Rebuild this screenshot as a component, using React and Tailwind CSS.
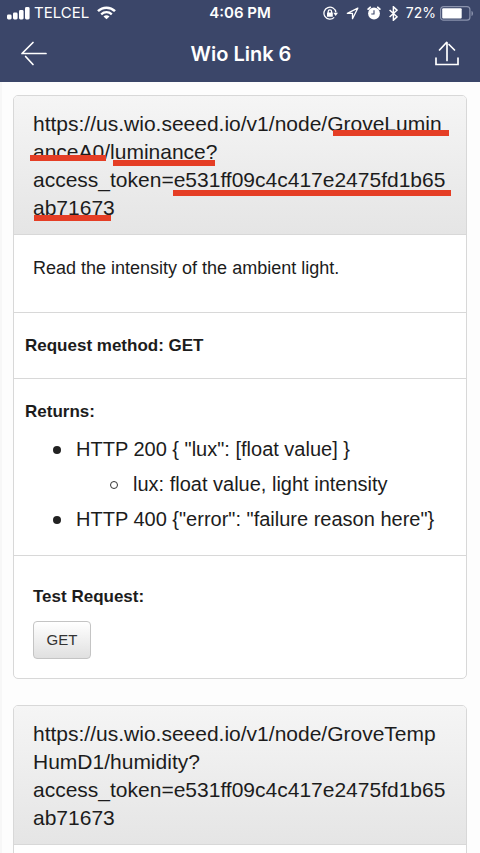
import React from "react";

const TOKEN_HEAD = "e531ff09c4c417e2475fd1b65";
const TOKEN_TAIL = "ab71673";

function StatusBar() {
  return (
    <div className="flex h-[26px] items-center px-[7px] text-white">
      <div className="flex flex-1 items-center">
        <svg className="h-[13px] w-[23px]" viewBox="0 0 23 13" fill="currentColor" aria-label="Signal">
          <rect x="0" y="7.5" width="4.6" height="5" rx="1.4" />
          <rect x="6" y="5.5" width="4.6" height="7" rx="1.4" />
          <rect x="12" y="3" width="4.6" height="9.5" rx="1.4" />
          <rect x="18" y="0" width="4.6" height="12.5" rx="1.4" />
        </svg>
        <span className="ml-1 font-[Inter,sans-serif] text-[15px] leading-5">TELCEL</span>
        <svg className="ml-2 h-[14px] w-[19px]" viewBox="0 0 19 14" fill="none" stroke="currentColor" aria-label="Wi-Fi">
          <path d="M1 5.1C5.7.5 13.3.5 18 5.1" strokeWidth="2.5" />
          <path d="M4.2 8.3c3-2.8 7.6-2.8 10.6 0" strokeWidth="2.3" />
          <path d="M9.5 13.3 6.5 10.4c1.7-1.5 4.3-1.5 6 0Z" fill="currentColor" stroke="none" />
        </svg>
      </div>
      <span className="font-[Inter,sans-serif] text-[15px] leading-5 font-semibold">4:06 PM</span>
      <div className="flex flex-1 items-center justify-end">
        <svg className="h-[15px] w-[15px]" viewBox="0 0 15 15" fill="none" stroke="currentColor" aria-label="Rotation lock">
          <path d="M12.9 6.3A6 6 0 1 0 11.2 11.4" strokeWidth="1.3" />
          <path d="M10.3 6.7h4.7l-2.3 3.2Z" fill="currentColor" stroke="none" />
          <rect x="4" y="6.5" width="5.8" height="4.2" rx=".5" fill="currentColor" stroke="none" />
          <path d="M5.2 7V5.5a1.7 1.7 0 0 1 3.4 0V7" strokeWidth="1.3" />
        </svg>
        <svg className="ml-2 h-[13px] w-[13px]" viewBox="0 0 13 13" fill="none" stroke="currentColor" aria-label="Location">
          <path d="M11.8 1.2 1.3 6.3h5.2v5.4Z" strokeWidth="1.3" strokeLinejoin="round" />
        </svg>
        <svg className="ml-2 h-[14px] w-[14px]" viewBox="0 0 14 14" aria-label="Alarm">
          <path d="M1.2 3.2 3.2 1.3M12.8 3.2 10.8 1.3" stroke="currentColor" strokeWidth="1.8" strokeLinecap="round" />
          <circle cx="7" cy="7.5" r="5.9" fill="currentColor" />
          <path d="M7 4.3v3.7H4.3" fill="none" stroke="#3b4669" strokeWidth="1.1" />
        </svg>
        <svg className="ml-2 h-[15px] w-[9px]" viewBox="0 0 9 15" fill="none" stroke="currentColor" aria-label="Bluetooth">
          <path d="m.6 4 7.4 6.8-3.6 3.4V.8L8 4.2.6 11" strokeWidth="1.5" />
        </svg>
        <span className="ml-2 font-[Inter,sans-serif] text-[14px] leading-5">72%</span>
        <svg className="ml-1 -mr-[1px] h-[15px] w-[34px]" viewBox="0 0 34 15" aria-label="Battery">
          <rect x=".6" y=".6" width="29.3" height="13.6" rx="3" fill="none" stroke="#8b93ad" strokeWidth="1.2" />
          <rect x="2.2" y="2.2" width="19.5" height="10.4" rx="1" fill="currentColor" />
          <path d="M31.5 5c2 .6 2 4.4 0 5Z" fill="#8b93ad" />
        </svg>
      </div>
    </div>
  );
}

function NavBar() {
  return (
    <div className="flex h-14 items-center justify-between px-5 text-white">
      <button type="button" aria-label="Back" className="flex h-8 w-[28px] items-center">
        <svg className="h-[26px] w-[28px]" viewBox="0 0 28 26" fill="none" stroke="currentColor" strokeWidth="1.7" strokeLinecap="round">
          <path d="M2 12.5h24M13 1.5 2 12.5M5.6 15.5 13 23.5" />
        </svg>
      </button>
      <h1 className="font-[Inter,sans-serif] text-[20px] leading-7 font-semibold">Wio Link 6</h1>
      <button type="button" aria-label="Share" className="flex h-8 w-[26px] items-center">
        <svg className="h-[26px] w-[26px]" viewBox="0 0 26 26" fill="none" stroke="currentColor" strokeWidth="1.7" strokeLinecap="round">
          <path d="M13 19.5V1.5M5.5 9 12.5 1.5M20.5 9l-5.5-5.5M2 17v6.5h22V17" />
        </svg>
      </button>
    </div>
  );
}

function Mark({ className }) {
  return <span aria-hidden="true" className={"absolute h-[6px] bg-[#e53e25] " + className} />;
}

function Endpoint({ lines, marks, children }) {
  return (
    <section className="rounded-[5px] border border-[#d8d8d8] bg-white">
      <h2 className="relative rounded-t-[4px] border-b border-[#d8d8d8] bg-linear-to-b from-[#f5f5f5] to-[#e5e5e5] px-[19px] pt-[14px] pb-3 text-[21px] leading-7">
        {lines.map((line) => (
          <span key={line} className="block whitespace-nowrap">{line}</span>
        ))}
        {marks}
      </h2>
      {children}
    </section>
  );
}

function Item({ hollow, children }) {
  return (
    <div className="flex items-center">
      <span
        className={
          hollow
            ? "mr-[15px] size-2 rounded-full border border-[#333]"
            : "mr-[15px] size-2 rounded-full bg-[#222]"
        }
      />
      {children}
    </div>
  );
}

export default function App() {
  return (
    <div className="flex h-screen flex-col bg-[#fdfdfd] font-['Liberation_Sans',Arial,sans-serif] text-[#1c1c1c]">
      <header className="shrink-0 bg-[#3b4669]">
        <StatusBar />
        <NavBar />
      </header>
      <main className="flex min-h-0 flex-1 flex-col gap-[26px] overflow-y-auto border-l-2 border-[#f7f7f7] pt-[13px] pr-[13px] pl-[11px] [scrollbar-width:none]">
        <Endpoint
          lines={[
            "https://us.wio.seeed.io/v1/node/GroveLumin",
            "anceA0/luminance?",
            "access_token=" + TOKEN_HEAD,
            TOKEN_TAIL,
          ]}
          marks={
            <>
              <Mark className="top-[34px] left-[319px] w-[116px]" />
              <Mark className="top-[59px] left-4 w-[76px]" />
              <Mark className="top-[64px] left-[99px] w-[102px]" />
              <Mark className="top-[94px] left-[159px] w-[278px]" />
              <Mark className="top-[119px] left-5 w-[77px]" />
            </>
          }
        >
          <p className="border-b border-[#d8d8d8] px-[19px] pt-[21px] pb-8 text-[18px] leading-6">
            Read the intensity of the ambient light.
          </p>
          <p className="border-b border-[#d8d8d8] px-[11px] pt-[21px] pb-5 text-[17px] leading-6 font-bold">
            Request method: GET
          </p>
          <div className="border-b border-[#d8d8d8] px-[11px] pt-[21px] pb-[18px]">
            <h3 className="text-[17px] leading-6 font-bold">Returns:</h3>
            <ul className="pt-2 pl-[28px] text-[20px] leading-[35px]">
              <li>
                <Item>{'HTTP 200 { "lux": [float value] }'}</Item>
                <ul className="pl-[57px]">
                  <li><Item hollow>lux: float value, light intensity</Item></li>
                </ul>
              </li>
              <li><Item>{'HTTP 400 {"error": "failure reason here"}'}</Item></li>
            </ul>
          </div>
          <div className="px-[19px] pt-[29px] pb-[19px]">
            <h3 className="text-[17px] leading-6 font-bold">Test Request:</h3>
            <button
              type="button"
              className="mt-3 block h-[38px] w-[58px] rounded-[4px] border border-[#c4c4c4] bg-linear-to-b from-white to-[#e0e0e0] text-[15px] leading-5 text-[#333]"
            >
              GET
            </button>
          </div>
        </Endpoint>
        <Endpoint
          lines={[
            "https://us.wio.seeed.io/v1/node/GroveTemp",
            "HumD1/humidity?",
            "access_token=" + TOKEN_HEAD,
            TOKEN_TAIL,
          ]}
        >
          <div className="h-20" />
        </Endpoint>
      </main>
    </div>
  );
}
